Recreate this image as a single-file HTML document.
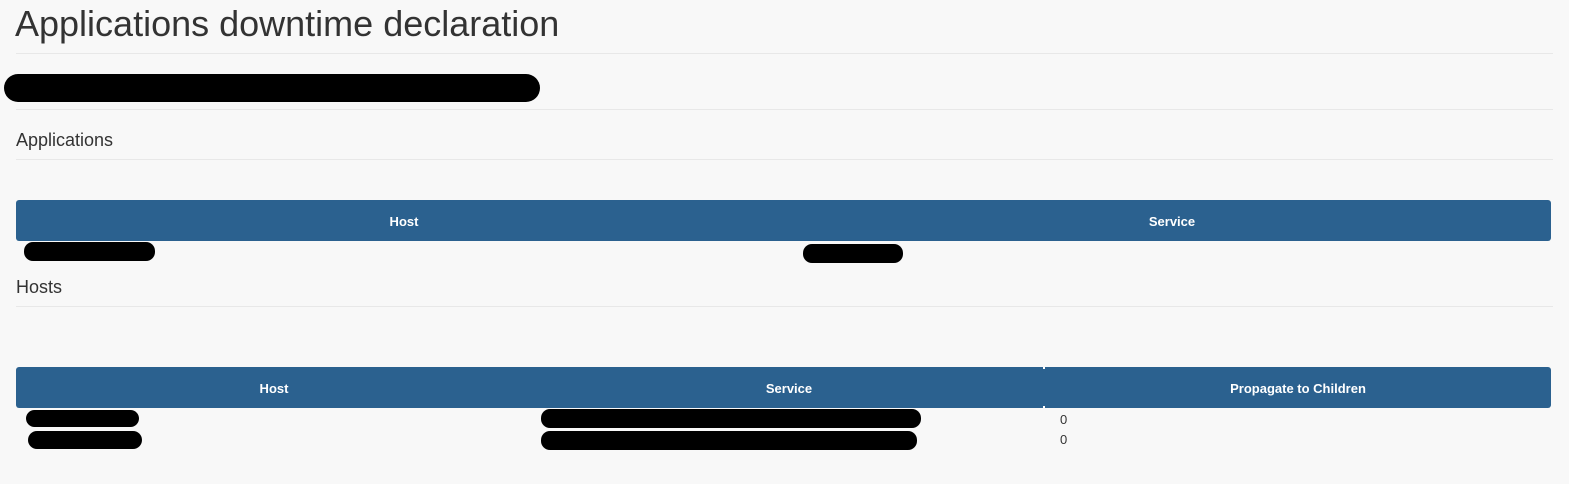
<!DOCTYPE html>
<html><head><style>
body{margin:0;background:#f8f8f8;width:1569px;height:484px;overflow:hidden;position:relative;font-family:"Liberation Sans",Arial,sans-serif;color:#333}
.a{position:absolute}
.hr{position:absolute;left:16px;right:16px;height:1px;background:#e8e8e8}
.bar{position:absolute;left:16px;width:1535px;height:41px;background:#2b618f;border-radius:3px;color:#fff;font-weight:bold;font-size:13px}
.bar span{position:absolute;top:14px;transform:translateX(-50%)}
.s{position:absolute;background:#000;border-radius:9px}
</style></head><body>
<div class="a" style="left:15px;top:3px;font-size:36px;">Applications downtime declaration</div>
<div class="hr" style="top:53px"></div>
<div class="s" style="left:4px;top:74px;width:536px;height:28px;border-radius:14px"></div>
<div class="hr" style="top:109px"></div>
<div class="a" style="left:16px;top:130px;font-size:18px">Applications</div>
<div class="hr" style="top:159px"></div>
<div class="bar" style="top:200px"><span style="left:388px">Host</span><span style="left:1156px">Service</span></div>
<div class="s" style="left:24px;top:242px;width:131px;height:19px"></div>
<div class="s" style="left:803px;top:244px;width:100px;height:19px"></div>
<div class="a" style="left:16px;top:277px;font-size:18px">Hosts</div>
<div class="hr" style="top:306px"></div>
<div class="bar" style="top:367px"><span style="left:258px">Host</span><span style="left:773px">Service</span><span style="left:1282px">Propagate to Children</span></div>
<div class="a" style="left:1043px;top:367px;width:2px;height:2px;background:#fff"></div>
<div class="a" style="left:1043px;top:406px;width:2px;height:2px;background:#fff"></div>
<div class="s" style="left:26px;top:410px;width:113px;height:17px"></div>
<div class="s" style="left:541px;top:409px;width:380px;height:19px"></div>
<div class="s" style="left:28px;top:431px;width:114px;height:18px"></div>
<div class="s" style="left:541px;top:431px;width:376px;height:19px"></div>
<div class="a" style="left:1060px;top:412px;font-size:13px">0</div>
<div class="a" style="left:1060px;top:432px;font-size:13px">0</div>
</body></html>
